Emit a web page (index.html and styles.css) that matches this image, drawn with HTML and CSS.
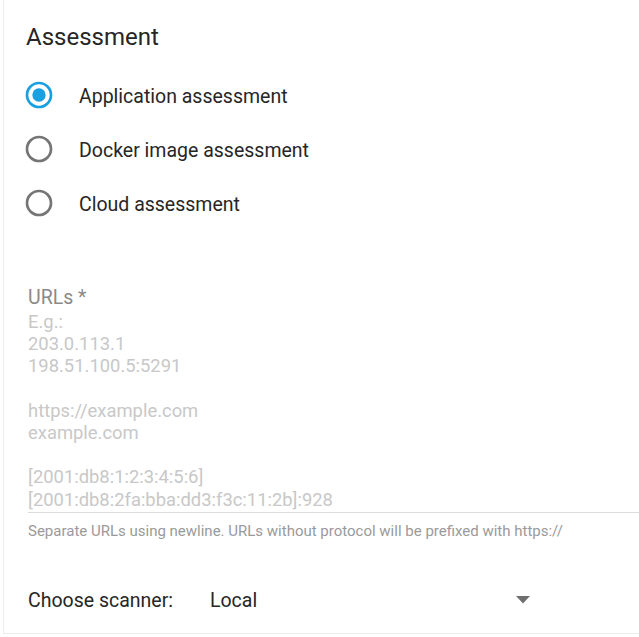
FILE: index.html
```html
<!DOCTYPE html>
<html lang="en">
<head>
<meta charset="utf-8">
<title>Assessment</title>
<link rel="stylesheet" href="styles.css">
</head>
<body>
<div class="panel">
  <h2 class="title">Assessment</h2>
  <div class="radios">
    <label class="radio radio-checked">
      <svg class="radio-icon" viewBox="0 0 24 24" width="32" height="32"><circle cx="12" cy="12" r="9" fill="none" stroke="currentColor" stroke-width="2"/><circle cx="12" cy="12" r="5" fill="currentColor"/></svg>
      <span class="radio-label">Application assessment</span>
    </label>
    <label class="radio">
      <svg class="radio-icon" viewBox="0 0 24 24" width="32" height="32"><circle cx="12" cy="12" r="9" fill="none" stroke="currentColor" stroke-width="2"/></svg>
      <span class="radio-label">Docker image assessment</span>
    </label>
    <label class="radio">
      <svg class="radio-icon" viewBox="0 0 24 24" width="32" height="32"><circle cx="12" cy="12" r="9" fill="none" stroke="currentColor" stroke-width="2"/></svg>
      <span class="radio-label">Cloud assessment</span>
    </label>
  </div>
  <div class="field">
    <div class="field-label">URLs *</div>
    <div class="textarea">
      <div class="ph">E.g.:</div>
      <div class="ph">203.0.113.1</div>
      <div class="ph">198.51.100.5:5291</div>
      <div class="ph">&nbsp;</div>
      <div class="ph">https://example.com</div>
      <div class="ph">example.com</div>
      <div class="ph">&nbsp;</div>
      <div class="ph">[2001:db8:1:2:3:4:5:6]</div>
      <div class="ph">[2001:db8:2fa:bba:dd3:f3c:11:2b]:928</div>
    </div>
    <p class="helper">Separate URLs using newline. URLs without protocol will be prefixed with https://</p>
  </div>
  <div class="scanner-row">
    <span class="scanner-label">Choose scanner:</span>
    <div class="select">
      <span class="select-value">Local</span>
      <svg class="select-arrow" viewBox="0 0 14 8" width="14" height="8"><path d="M0 0h14L7 7.5z" fill="currentColor"/></svg>
    </div>
  </div>
</div>
</body>
</html>
```

FILE: styles.css
```css
html, body {
  margin: 0;
  padding: 0;
  background: #ffffff;
}
body {
  font-family: Roboto, "Noto Sans", Arial, sans-serif;
  color: #262626;
}
.panel {
  margin-left: 3px;
  border-left: 1px solid #ededed;
  border-bottom: 1px solid #ededed;
  padding-top: 23px;
  padding-bottom: 13px;
  box-sizing: border-box;
  height: 634px;
}
.title {
  margin: 0;
  padding-left: 22px;
  font-size: 24px;
  line-height: 28px;
  font-weight: 400;
  color: #262626;
}
.radios {
  margin-top: 17px;
  display: flex;
  flex-direction: column;
}
.radio {
  height: 54px;
  display: flex;
  align-items: center;
  padding-left: 19px;
}
.radio-icon {
  color: #757575;
  flex: none;
}
.radio-checked .radio-icon {
  color: #1a9fe0;
}
.radio-label {
  margin-left: 24px;
  padding-top: 2px;
  font-size: 19.5px;
  color: #262626;
}
.field {
  margin-top: 57px;
  padding-left: 24px;
}
.field-label {
  font-size: 19.5px;
  line-height: 22px;
  color: #8a8a8a;
}
.textarea {
  margin-top: 1.5px;
  padding-bottom: 1px;
  border-bottom: 1px solid #dcdcdc;
}
.ph {
  font-size: 18.4px;
  line-height: 22.25px;
  color: #c8c8c8;
}
.helper {
  margin: 9.5px 0 0;
  font-size: 15px;
  line-height: 18px;
  color: #9a9a9a;
}
.scanner-row {
  margin-top: 40px;
  height: 40px;
  display: flex;
  align-items: center;
  padding-left: 24px;
}
.scanner-label {
  width: 182px;
  font-size: 19.5px;
  color: #262626;
}
.select {
  width: 320px;
  display: flex;
  align-items: center;
  justify-content: space-between;
}
.select-value {
  font-size: 19.5px;
  color: #262626;
}
.select-arrow {
  color: #6f6f6f;
}
```
